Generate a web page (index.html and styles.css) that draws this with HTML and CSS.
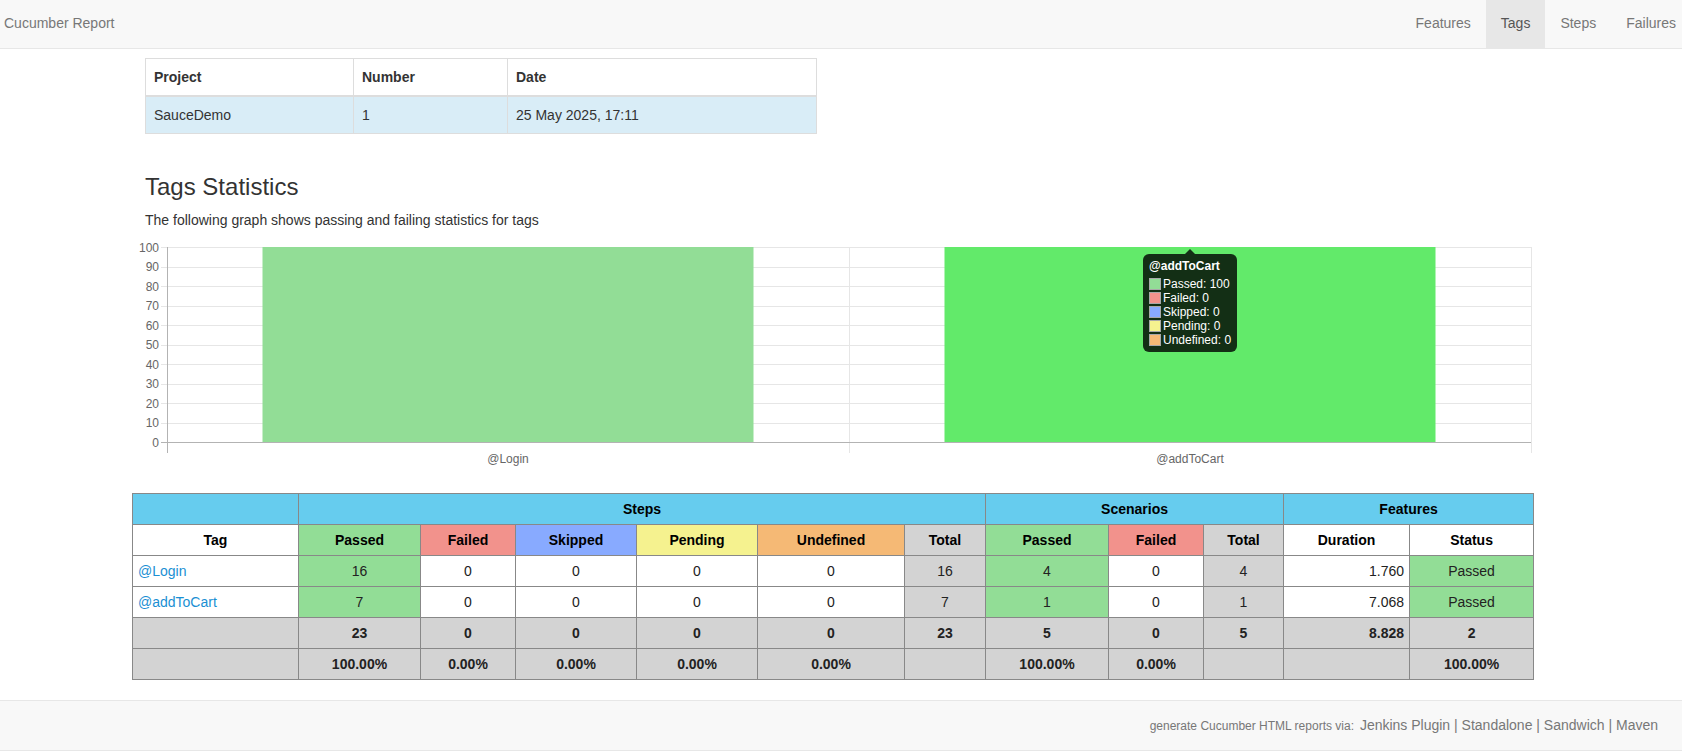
FILE: index.html
```html
<!DOCTYPE html>
<html lang="en">
<head>
<meta charset="utf-8">
<title>Cucumber Report - Tags</title>
<link rel="stylesheet" href="styles.css">
</head>
<body>
<nav class="navbar">
  <span class="brand">Cucumber Report</span>
  <ul class="nav">
    <li><a href="#">Features</a></li>
    <li class="active"><a href="#">Tags</a></li>
    <li><a href="#">Steps</a></li>
    <li><a href="#">Failures</a></li>
  </ul>
</nav>

<main class="main">
  <table class="info-table">
    <colgroup><col class="c-project"><col class="c-number"><col class="c-date"></colgroup>
    <thead>
      <tr><th>Project</th><th>Number</th><th>Date</th></tr>
    </thead>
    <tbody>
      <tr class="info"><td>SauceDemo</td><td>1</td><td>25 May 2025, 17:11</td></tr>
    </tbody>
  </table>

  <h3 class="title">Tags Statistics</h3>
  <p class="lead">The following graph shows passing and failing statistics for tags</p>

  <div class="chart">
    <svg class="chart-svg" width="1401" height="243" viewBox="0 0 1401 243" xmlns="http://www.w3.org/2000/svg">
      <g stroke="#e6e6e6" stroke-width="1" shape-rendering="crispEdges">
        <line x1="29" y1="17.5" x2="1399" y2="17.5"/>
        <line x1="29" y1="37" x2="1399" y2="37"/>
        <line x1="29" y1="56.5" x2="1399" y2="56.5"/>
        <line x1="29" y1="76" x2="1399" y2="76"/>
        <line x1="29" y1="95.5" x2="1399" y2="95.5"/>
        <line x1="29" y1="115" x2="1399" y2="115"/>
        <line x1="29" y1="134.5" x2="1399" y2="134.5"/>
        <line x1="29" y1="154" x2="1399" y2="154"/>
        <line x1="29" y1="173.5" x2="1399" y2="173.5"/>
        <line x1="29" y1="193" x2="1399" y2="193"/>
        <line x1="717.5" y1="17" x2="717.5" y2="223"/>
        <line x1="1399.5" y1="17" x2="1399.5" y2="223"/>
      </g>
      <rect x="130.5" y="17" width="491" height="195.5" fill="#92dd96"/>
      <rect x="812.5" y="17" width="491" height="195.5" fill="#62ea6a"/>
      <g stroke="#b3b3b3" stroke-width="1" shape-rendering="crispEdges">
        <line x1="29" y1="212.5" x2="1399" y2="212.5"/>
        <line x1="35.5" y1="17" x2="35.5" y2="223"/>
      </g>
      <g class="ylab" text-anchor="end" fill="#666" font-size="12">
        <text x="27" y="21.5">100</text>
        <text x="27" y="41">90</text>
        <text x="27" y="60.5">80</text>
        <text x="27" y="80">70</text>
        <text x="27" y="99.5">60</text>
        <text x="27" y="119">50</text>
        <text x="27" y="138.5">40</text>
        <text x="27" y="158">30</text>
        <text x="27" y="177.5">20</text>
        <text x="27" y="197">10</text>
        <text x="27" y="216.5">0</text>
      </g>
      <g class="xlab" text-anchor="middle" fill="#666" font-size="12">
        <text x="376" y="233">@Login</text>
        <text x="1058" y="233">@addToCart</text>
      </g>
    </svg>
    <div class="tooltip">
      <div class="tt-title">@addToCart</div>
      <div class="tt-row"><span class="sw sw-passed"></span>Passed: 100</div>
      <div class="tt-row"><span class="sw sw-failed"></span>Failed: 0</div>
      <div class="tt-row"><span class="sw sw-skipped"></span>Skipped: 0</div>
      <div class="tt-row"><span class="sw sw-pending"></span>Pending: 0</div>
      <div class="tt-row"><span class="sw sw-undefined"></span>Undefined: 0</div>
    </div>
  </div>

  <table class="stats-table">
    <colgroup>
      <col class="w-tag"><col class="w-passed"><col class="w-failed"><col class="w-skipped"><col class="w-pending"><col class="w-undefined"><col class="w-total">
      <col class="w-spassed"><col class="w-sfailed"><col class="w-stotal"><col class="w-duration"><col class="w-status">
    </colgroup>
    <thead>
      <tr class="head-top">
        <th></th>
        <th colspan="6">Steps</th>
        <th colspan="3">Scenarios</th>
        <th colspan="2">Features</th>
      </tr>
      <tr class="head-sub">
        <th class="white">Tag</th>
        <th class="passed">Passed</th>
        <th class="failed">Failed</th>
        <th class="skipped">Skipped</th>
        <th class="pending">Pending</th>
        <th class="undefined">Undefined</th>
        <th class="total">Total</th>
        <th class="passed">Passed</th>
        <th class="failed">Failed</th>
        <th class="total">Total</th>
        <th class="white">Duration</th>
        <th class="white">Status</th>
      </tr>
    </thead>
    <tbody>
      <tr>
        <td class="tagname"><a href="#">@Login</a></td>
        <td class="passed">16</td>
        <td>0</td>
        <td>0</td>
        <td>0</td>
        <td>0</td>
        <td class="total">16</td>
        <td class="passed">4</td>
        <td>0</td>
        <td class="total">4</td>
        <td class="duration">1.760</td>
        <td class="passed">Passed</td>
      </tr>
      <tr>
        <td class="tagname"><a href="#">@addToCart</a></td>
        <td class="passed">7</td>
        <td>0</td>
        <td>0</td>
        <td>0</td>
        <td>0</td>
        <td class="total">7</td>
        <td class="passed">1</td>
        <td>0</td>
        <td class="total">1</td>
        <td class="duration">7.068</td>
        <td class="passed">Passed</td>
      </tr>
    </tbody>
    <tfoot>
      <tr>
        <td></td>
        <td>23</td>
        <td>0</td>
        <td>0</td>
        <td>0</td>
        <td>0</td>
        <td>23</td>
        <td>5</td>
        <td>0</td>
        <td>5</td>
        <td class="duration">8.828</td>
        <td>2</td>
      </tr>
      <tr>
        <td></td>
        <td>100.00%</td>
        <td>0.00%</td>
        <td>0.00%</td>
        <td>0.00%</td>
        <td>0.00%</td>
        <td></td>
        <td>100.00%</td>
        <td>0.00%</td>
        <td></td>
        <td></td>
        <td>100.00%</td>
      </tr>
    </tfoot>
  </table>
</main>

<footer class="footer">
  <div class="footer-text">
    <small>generate Cucumber HTML reports via:</small>
    <a href="#">Jenkins Plugin</a> | <a href="#">Standalone</a> | <a href="#">Sandwich</a> | <a href="#">Maven</a>
  </div>
</footer>
</body>
</html>
```

FILE: styles.css
```css
* { box-sizing: border-box; }

html, body {
  margin: 0;
  padding: 0;
}

body {
  font-family: "Liberation Sans", Arial, Helvetica, sans-serif;
  font-size: 14px;
  line-height: 20px;
  color: #333;
  background: #fff;
  overflow-x: hidden;
}

a { text-decoration: none; }

/* Navbar */
.navbar {
  display: flex;
  justify-content: space-between;
  align-items: stretch;
  height: 49px;
  background: #f8f8f8;
  border-bottom: 1px solid #e7e7e7;
  overflow: hidden;
}

.brand {
  padding: 13px 0 15px 4px;
  color: #777;
  font-size: 14px;
  line-height: 20px;
}

.nav {
  display: flex;
  list-style: none;
  margin: 0 -9px 0 0;
  padding: 0;
}

.nav li a {
  display: block;
  height: 48px;
  padding: 13px 15px 15px;
  color: #777;
  line-height: 20px;
}

.nav li.active a {
  background: #e7e7e7;
  color: #555;
}

/* Main */
.main {
  width: 1401px;
  margin-left: 132px;
}

.info-table {
  width: 671px;
  margin: 9px 0 0 13px;
  border-collapse: collapse;
  table-layout: fixed;
  border: 1px solid #ddd;
}

.c-project { width: 208px; }
.c-number { width: 154px; }
.c-date { width: 309px; }

.info-table th,
.info-table td {
  padding: 8px;
  line-height: 20px;
  text-align: left;
  border: 1px solid #ddd;
}

.info-table th {
  font-weight: bold;
  border-bottom: 2px solid #ddd;
}

.info-table tr.info td {
  background: #d9edf7;
}

.title {
  margin: 40px 0 10px 13px;
  font-size: 24px;
  line-height: 26.4px;
  font-weight: 500;
  color: #333;
}

.lead {
  margin: 0 0 0 13px;
  font-size: 14px;
  line-height: 20px;
}

/* Chart */
.chart {
  position: relative;
  height: 243px;
}

.chart-svg {
  display: block;
  font-family: "Liberation Sans", Arial, Helvetica, sans-serif;
}

.tooltip {
  position: absolute;
  left: 1011px;
  top: 24px;
  width: 94px;
  padding: 6px;
  background: #132f15;
  border-radius: 6px;
  color: #fff;
  font-size: 12px;
  line-height: 12px;
}

.tooltip::before {
  content: "";
  position: absolute;
  left: 42px;
  top: -5px;
  border-left: 5px solid transparent;
  border-right: 5px solid transparent;
  border-bottom: 5px solid #132f15;
}

.tt-title {
  font-weight: bold;
  margin-bottom: 6px;
  white-space: nowrap;
}

.tt-row {
  display: flex;
  align-items: center;
  white-space: nowrap;
  margin-bottom: 2px;
}

.tt-row:last-child { margin-bottom: 0; }

.sw {
  width: 12px;
  height: 12px;
  margin-right: 2px;
  border: 1px solid #a8a8a8;
  flex: none;
}

.sw-passed { background: #92dd96; }
.sw-failed { background: #f2928c; }
.sw-skipped { background: #88aaff; }
.sw-pending { background: #f5f28f; }
.sw-undefined { background: #f5b975; }

/* Stats table */
.stats-table {
  width: 1401px;
  margin-top: 20px;
  border-collapse: collapse;
  table-layout: fixed;
  border: 1px solid #888;
}

.w-tag { width: 166px; }
.w-passed { width: 122px; }
.w-failed { width: 95px; }
.w-skipped { width: 121px; }
.w-pending { width: 121px; }
.w-undefined { width: 147px; }
.w-total { width: 81px; }
.w-spassed { width: 123px; }
.w-sfailed { width: 95px; }
.w-stotal { width: 80px; }
.w-duration { width: 126px; }
.w-status { width: 124px; }

.stats-table th,
.stats-table td {
  border: 1px solid #888;
  padding: 5px;
  line-height: 20px;
  text-align: center;
  white-space: nowrap;
}

.stats-table th {
  font-weight: bold;
  color: #000;
}

.stats-table td {
  color: #222;
  background: #fff;
}

.stats-table .head-top th {
  background: #66ccee;
}

.stats-table th.white { background: #fff; }

.stats-table .passed { background: #92dd96; }
.stats-table .failed { background: #f2928c; }
.stats-table .skipped { background: #88aaff; }
.stats-table .pending { background: #f5f28f; }
.stats-table .undefined { background: #f5b975; }
.stats-table .total { background: #d3d3d3; }

.stats-table td.tagname { text-align: left; }
.stats-table td.tagname a { color: #1a8fd3; }
.stats-table td.duration { text-align: right; }

.stats-table tfoot td {
  background: #d3d3d3;
  font-weight: bold;
  color: #222;
}

/* Footer */
.footer {
  margin-top: 20px;
  height: 51px;
  background: #f8f8f8;
  border-top: 1px solid #e7e7e7;
  border-bottom: 1px solid #e7e7e7;
  display: flex;
  justify-content: flex-end;
  align-items: center;
  padding-right: 24px;
}

.footer-text {
  color: #777;
  font-size: 14px;
  line-height: 20px;
}

.footer-text small {
  font-size: 12px;
  margin-right: 2px;
}

.footer-text a {
  color: #777;
}
```
